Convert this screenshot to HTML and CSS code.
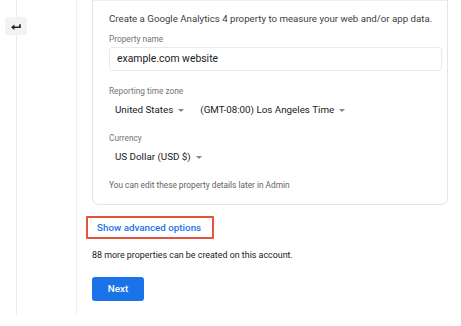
FILE: index.html
```html
<!DOCTYPE html>
<html>
	<head>
		<meta charset="utf-8">
		<title>Create property</title>
		<link rel="stylesheet" href="styles.css">
	</head>
	<body>
		<div class="page">
			<div class="nav">
				<div class="rail">
					<div class="rail-line rail-top"></div>
					<div class="back-btn">
						<svg width="10" height="7" viewBox="0 0 10 7">
							<path d="M9 1.2 V4.2 H3" fill="none" stroke="#202124" stroke-width="1.6"/>
							<polygon points="0,4.2 3.4,1.4 3.4,7" fill="#202124"/>
						</svg>
					</div>
					<div class="rail-line rail-rest"></div>
				</div>
			</div>
			<div class="main">
				<div class="card">
					<div class="intro">Create a Google Analytics 4 property to measure your web and/or app data.</div>
					<div class="label label-first">Property name</div>
					<div class="input">example.com website</div>
					<div class="label label-zone">Reporting time zone</div>
					<div class="selects">
						<span class="select">United States <span class="caret"></span></span>
						<span class="select">(GMT-08:00) Los Angeles Time <span class="caret"></span></span>
					</div>
					<div class="label label-currency">Currency</div>
					<div class="selects">
						<span class="select">US Dollar (USD $) <span class="caret"></span></span>
					</div>
					<div class="note">You can edit these property details later in Admin</div>
				</div>
				<div class="advanced">
					<span class="advanced-link">Show advanced options</span>
				</div>
				<div class="quota">88 more properties can be created on this account.</div>
				<div class="actions">
					<span class="next-btn">Next</span>
				</div>
			</div>
		</div>
	</body>
</html>
```

FILE: styles.css
```css
html, body {
	margin: 0;
	background: #ffffff;
}
body {
	font-family: Roboto, "Liberation Sans", sans-serif;
	color: #3c4043;
}
.page {
	display: flex;
	height: 315px;
}
.nav {
	width: 76px;
	border-right: 1px solid #eceef0;
}
.rail {
	display: flex;
	flex-direction: column;
	align-items: center;
	width: 22px;
	height: 100%;
	margin-left: 5px;
}
.rail-line {
	width: 1px;
	background: #e8eaed;
}
.rail-top {
	height: 17px;
}
.rail-rest {
	flex: 1;
}
.back-btn {
	display: flex;
	align-items: center;
	justify-content: center;
	width: 22px;
	height: 18px;
	background: #f1f3f4;
	border-radius: 2px;
}
.main {
	padding-left: 15px;
	flex: 1;
}
.card {
	width: 338px;
	padding: 11px 0 13px 16px;
	border: 1px solid #e3e5e8;
	border-top-color: #eceef0;
	border-radius: 0 0 7px 7px;
}
.intro {
	font-size: 9.7px;
	line-height: 14px;
}
.label {
	font-size: 8.3px;
	line-height: 12px;
	color: #70757a;
}
.label-first {
	margin-top: 7px;
}
.input {
	margin-top: 2px;
	width: 324px;
	height: 22px;
	padding-left: 7px;
	border: 1px solid #e8eaed;
	border-radius: 3px;
	font-size: 10.4px;
	line-height: 22px;
	color: #202124;
}
.label-zone {
	margin-top: 14px;
}
.label-currency {
	margin-top: 15px;
}
.selects {
	display: flex;
	gap: 16px;
	margin-top: 6px;
	padding-left: 6px;
	font-size: 9.8px;
	line-height: 14px;
	color: #202124;
}
.select {
	display: inline-flex;
	align-items: center;
}
.caret {
	display: inline-block;
	width: 0;
	height: 0;
	margin-left: 5px;
	border-left: 3px solid transparent;
	border-right: 3px solid transparent;
	border-top: 3px solid #80868b;
}
.note {
	margin-top: 15px;
	font-size: 8.3px;
	line-height: 12px;
	color: #5f6368;
}
.advanced {
	margin-top: 11px;
	margin-left: -6px;
}
.advanced-link {
	display: inline-block;
	width: 115px;
	height: 19px;
	padding-left: 9px;
	border: 2px solid #e5533c;
	border-radius: 1px;
	font-size: 9.8px;
	font-weight: 500;
	line-height: 19px;
	color: #1a73e8;
}
.quota {
	margin-top: 10px;
	font-size: 8.9px;
	line-height: 12px;
	color: #202124;
}
.actions {
	margin-top: 16px;
}
.next-btn {
	display: inline-block;
	width: 52px;
	height: 24px;
	background: #1a73e8;
	border-radius: 3px;
	font-size: 9.8px;
	font-weight: 500;
	line-height: 24px;
	text-align: center;
	color: #ffffff;
}
```
